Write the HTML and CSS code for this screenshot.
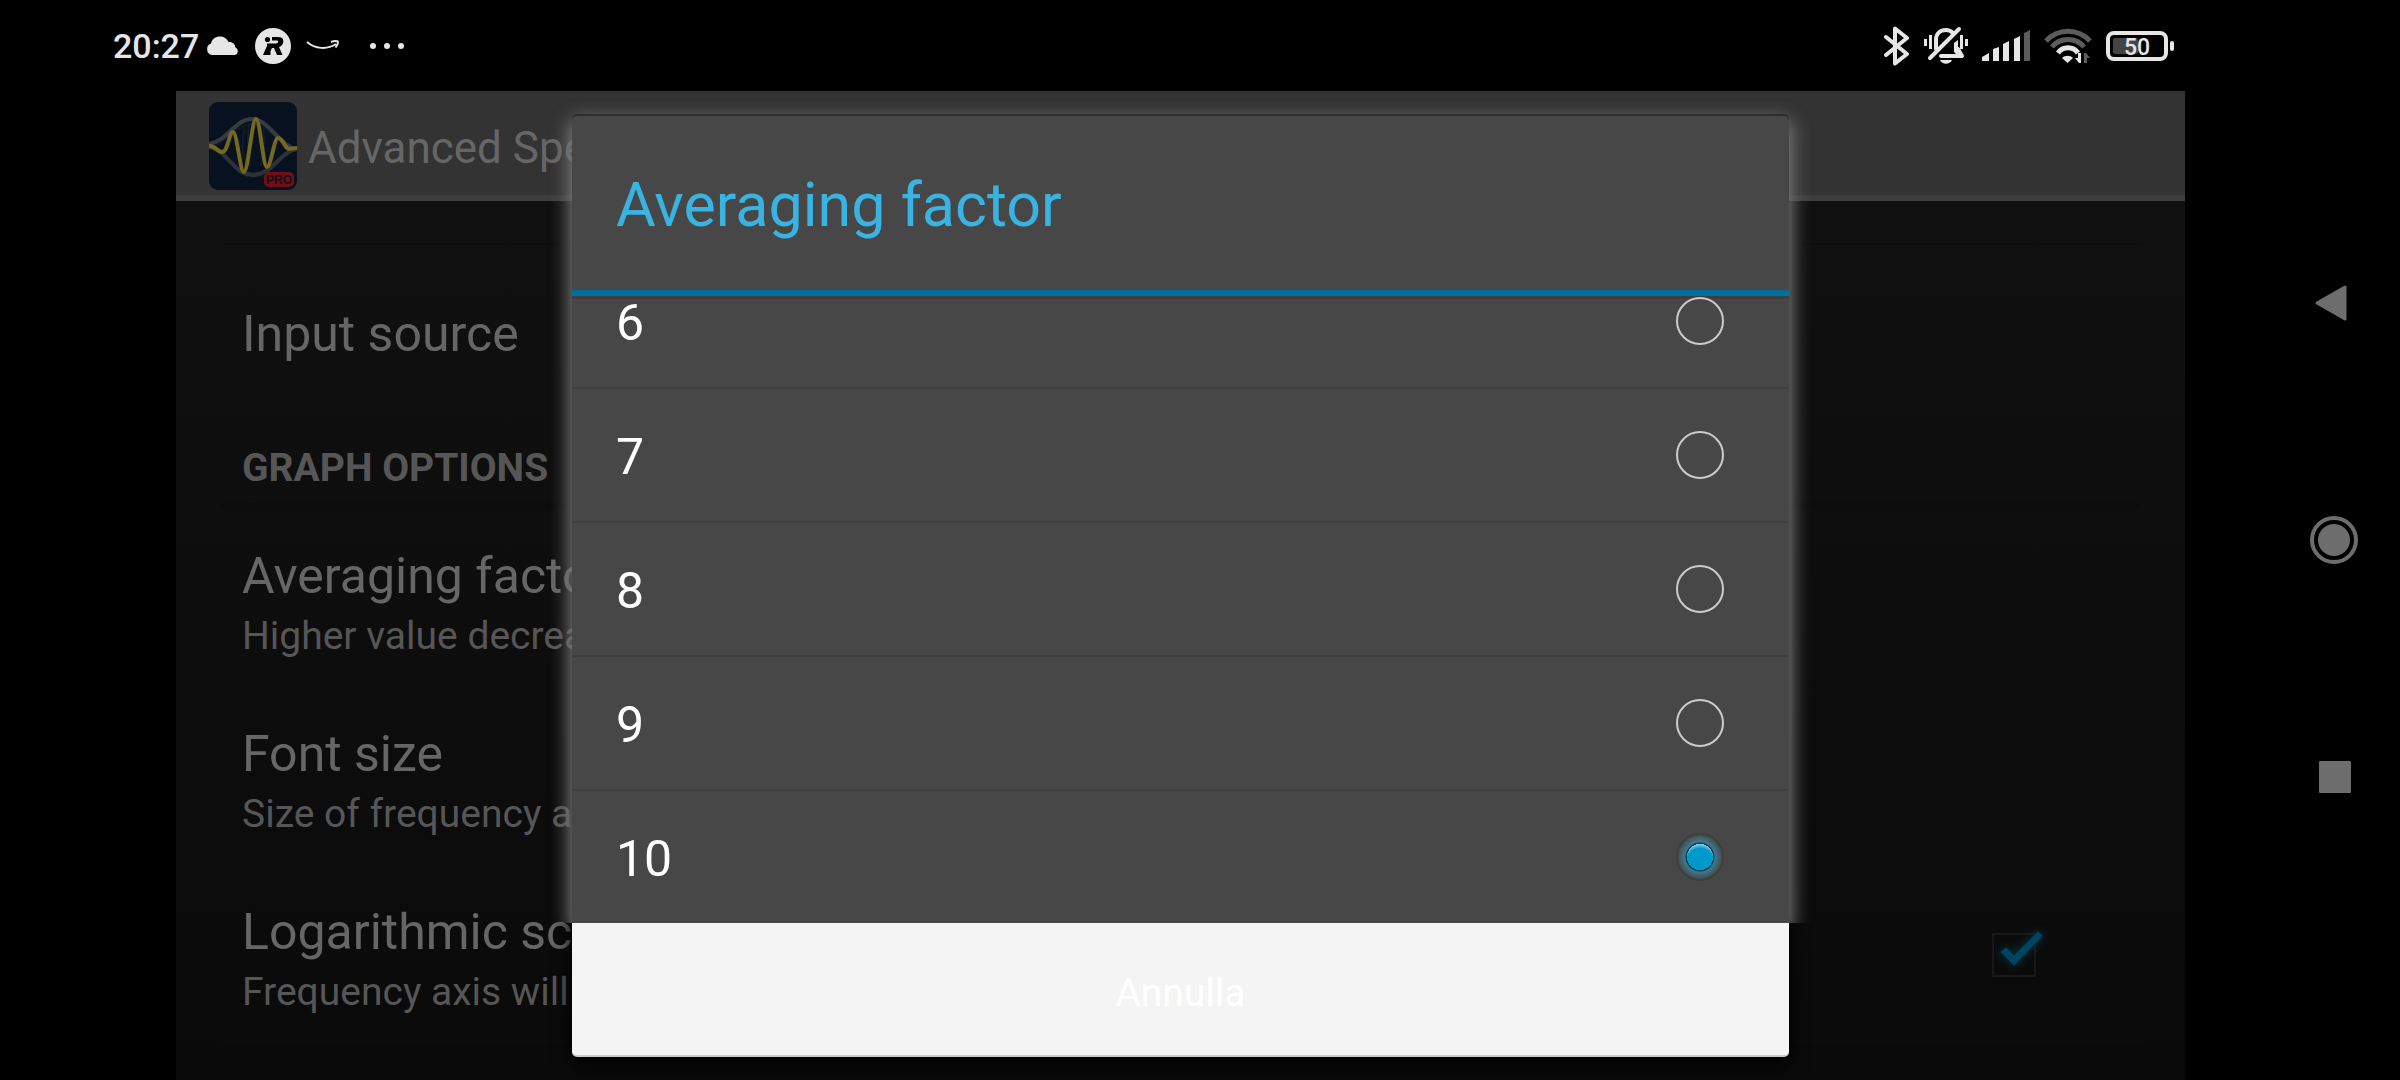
FILE: index.html
```
<!DOCTYPE html>
<html lang="en">

<head>
  <meta charset="utf-8" />
  <meta name="viewport" content="width=device-width, initial-scale=1" />
  <title>Averaging factor</title>
  <link rel="stylesheet" href="styles.css">
</head>

<body>
  <div class="screen">
    <div class="status_bar">
      <div class="status_left">
        <span class="clock">20:27</span>
        <svg class="cloud" width="34" height="20" viewBox="0 0 34 20">
          <path d="M6 19a6 6 0 0 1-1-11.500C6 3 9.500 0.500 14 0.500c4 0 7 2 8.500 5.500 4-.5 6.500 2 7 5.500a4 4 0 0 1-.5 7.500z" />
        </svg>
        <svg class="runner" width="36" height="36" viewBox="0 0 36 36">
          <circle cx="18" cy="18" r="18" />
          <circle class="cut" cx="12.500" cy="11.500" r="2.600" />
          <path class="cut" d="M17 9h6c5 0 6 3 5 6-.6 2-2 3.500-4 4l3.500 8h-5.500l-3-7h-2l-1.500 3v4H8l4-9v-2.500h9c2.500 0 3-3 1-3h-5z" />
        </svg>
        <svg class="smile" width="34" height="12" viewBox="0 0 34 12">
          <path d="M1 2c8 7 20 8 29 2" />
          <path d="M25 2c4-1.500 7-1 7 0s-1 4-2.500 5.500" />
        </svg>
        <svg class="dots" width="34" height="6" viewBox="0 0 34 6">
          <circle cx="3" cy="3" r="3" />
          <circle cx="17" cy="3" r="3" />
          <circle cx="31" cy="3" r="3" />
        </svg>
      </div>

      <div class="status_right">
        <svg class="line_icon" width="26" height="40" viewBox="0 0 26 40">
          <path d="M2 11l21 17-12 9.500V2.500L23 12 2 29" />
        </svg>
        <svg class="bell" width="44" height="40" viewBox="0 0 44 40">
          <path class="stroke" d="M12 23v-9c0-6 4-10 10-10 3 0 5 1 7 3M34 23l4 7H17" />
          <path class="stroke" d="M35 3L6 32" />
          <path class="thin" d="M1.500 13v7M6.500 9v14M37.500 9v14M42.500 13v7" />
          <path d="M34 14v11l3 5h-3l-4-4v-9z" />
          <path d="M16 34h12c-2 5-10 5-12 0z" />
        </svg>
        <svg class="signal" width="48" height="32" viewBox="0 0 48 32">
          <path d="M0 31v-4l7-4v8zM11 31V19l6-2v14zM21 31V14l6-3v20zM32 31V9l6-3v25z" />
          <path class="dim" d="M42 31V3l6-3v31z" />
        </svg>
        <svg class="wifi" width="48" height="36" viewBox="0 0 48 36">
          <path class="dim" d="M2 13c12-13 32-13 44 0" />
          <path class="dim" d="M8 19c8-10 24-10 32 0" />
          <path d="M14 25c5-7 15-7 20 0" />
          <path class="fill" d="M18 30c3-3 8-3 11 0l-5.500 5z" />
          <path class="fill" d="M37 25v10h-2l-4-5h3v-5z" />
          <path class="fill dim_fill" d="M40 35V25h2l4 5h-3v5z" />
        </svg>
        <svg class="battery" width="68" height="30" viewBox="0 0 68 30">
          <rect class="shell" x="2" y="2" width="58" height="26" rx="6" />
          <rect class="level" x="7" y="7" width="25" height="16" rx="2" />
          <rect x="64" y="10" width="4" height="10" rx="2" />
          <text x="31" y="24">50</text>
        </svg>
      </div>
    </div>

    <div class="app">
      <div class="action_bar">
        <svg class="app_icon" width="88" height="88" viewBox="0 0 88 88">
          <rect width="88" height="88" rx="9" fill="#07111f" />
          <path class="faint" d="M4 46C18 36 28 24 43 22s26 22 41 24M6 47c14 10 20 24 37 24s24-14 38-24M36 26q-6 20 2 38M40 24q-3 20 1 40M54 26q4 20-2 38" />
          <path class="envelope" d="M0 42C20 38 26 17 43 17s28 28 45 30" />
          <path class="envelope lower" d="M0 45c18 2 24 28 44 28s26-23 44-26" />
          <path class="wave" d="M0 44c6-1 8 6 13 6 6 0 7-20 11-20s7 40 11 40 8-53 12-53 7 48 11 48 7-29 11-29c5 0 7 11 11 11 3 0 4-1 8-1" />
          <rect x="55" y="70" width="30" height="15" rx="5" fill="#6f1114" />
          <text x="70" y="82">PRO</text>
        </svg>
        <h1>Advanced Spectrum Analyzer PRO</h1>
      </div>

      <div class="settings">
        <div class="item single">
          <div class="item_title">Input source</div>
        </div>
        <h2 class="category">GRAPH OPTIONS</h2>
        <div class="item">
          <div class="item_title">Averaging factor</div>
          <div class="item_summary">Higher value decreases noise</div>
        </div>
        <div class="item">
          <div class="item_title">Font size</div>
          <div class="item_summary">Size of frequency axis labels</div>
        </div>
        <label class="item with_check">
          <span>
            <span class="item_title">Logarithmic scale</span>
            <span class="item_summary">Frequency axis will be logarithmic</span>
          </span>
          <span class="check_box">
            <input type="checkbox" checked>
            <svg class="tick" width="64" height="56" viewBox="0 0 64 56">
              <path d="M16 23l6-5 8 8L54 2l5 5-29 30z" />
            </svg>
          </span>
        </label>
      </div>

      <div class="overlay">
        <div class="dialog" role="dialog" aria-labelledby="dialog_title">
          <div class="dialog_top">
            <h2 id="dialog_title">Averaging factor</h2>
            <div class="choices" role="radiogroup" aria-labelledby="dialog_title">
              <label class="choice"><span>6</span> <input type="radio" name="factor" value="6"></label>
              <label class="choice"><span>7</span> <input type="radio" name="factor" value="7"></label>
              <label class="choice"><span>8</span> <input type="radio" name="factor" value="8"></label>
              <label class="choice"><span>9</span> <input type="radio" name="factor" value="9"></label>
              <label class="choice"><span>10</span> <input type="radio" name="factor" value="10" checked></label>
            </div>
          </div>
          <button type="button" class="cancel_btn">Annulla</button>
        </div>
      </div>
    </div>
  </div>

  <div class="nav_bar">
    <button type="button" class="nav_btn" aria-label="Back">
      <svg width="50" height="46" viewBox="0 0 50 46">
        <path d="M8 23L36 7v32z" stroke-width="3" stroke-linejoin="round" />
      </svg>
    </button>
    <button type="button" class="nav_btn" aria-label="Home">
      <svg width="50" height="50" viewBox="0 0 50 50">
        <circle cx="25" cy="25" r="22" fill="none" stroke-width="4" />
        <circle cx="25" cy="25" r="16" stroke="none" />
      </svg>
    </button>
    <button type="button" class="nav_btn" aria-label="Recent apps">
      <svg width="50" height="46" viewBox="0 0 50 46">
        <rect x="10" y="7" width="32" height="32" rx="1" stroke="none" />
      </svg>
    </button>
  </div>
</body>

</html>
```
FILE: styles.css
```
* {
  box-sizing: border-box;
}

body {
  margin: 0;
  height: 100vh;
  display: flex;
  overflow: hidden;
  background-color: #000;
  font-family: Roboto, "Liberation Sans", sans-serif;
}

h1,
h2 {
  margin: 0;
  font-weight: 400;
}

.screen {
  flex: 1;
  min-width: 0;
  display: flex;
  flex-direction: column;
}

/* status bar */
.status_bar {
  height: 91px;
  padding: 0 94px 0 113px;
  display: flex;
  justify-content: space-between;
  align-items: center;
}

.status_left,
.status_right {
  display: flex;
  align-items: center;
  color: #e6e6e6;
  fill: #e6e6e6;
}

.status_right {
  gap: 14px;
}

.clock {
  font-size: 34px;
  font-weight: 500;
}

.cloud {
  margin-left: 7px;
}

.runner {
  margin: 0 15px;
}

.cut {
  fill: #000;
}

.smile,
.line_icon,
.stroke,
.thin {
  fill: none;
  stroke: #e6e6e6;
  stroke-width: 2;
}

.line_icon,
.stroke {
  stroke-width: 4;
  stroke-linejoin: round;
  stroke-linecap: round;
}

.thin {
  stroke-width: 3;
}

.dots {
  margin-left: 30px;
}

.dim {
  fill: #5c5c5c;
}

.wifi path {
  fill: none;
  stroke: #e6e6e6;
  stroke-width: 5;
}

.wifi .dim {
  stroke: #5c5c5c;
}

.wifi .fill {
  fill: #e6e6e6;
  stroke: none;
}

.wifi .dim_fill {
  fill: #5c5c5c;
}

.shell {
  fill: none;
  stroke: #e6e6e6;
  stroke-width: 4;
}

.level {
  fill: #444;
}

.battery text {
  font-size: 23px;
  font-weight: 500;
  text-anchor: middle;
}

/* app behind the dialog */
.app {
  position: relative;
  flex: 1;
  min-height: 0;
  margin: 0 83px 0 176px;
  display: flex;
  flex-direction: column;
  background: linear-gradient(#111, #0a0a0a);
}

.action_bar {
  height: 110px;
  padding: 6px 0 0 33px;
  display: flex;
  align-items: center;
  gap: 11px;
  background-color: #333;
  border-bottom: 6px solid #3e3e3e;
  color: #666;
}

.action_bar h1 {
  padding-top: 4px;
  font-size: 44px;
}

.app_icon path {
  fill: none;
  stroke-width: 4;
}

.app_icon .wave {
  stroke: #75681f;
}

.app_icon .envelope {
  stroke: #363b42;
}

.app_icon .lower {
  stroke: #2b323b;
}

.app_icon .faint {
  stroke: #101b29;
  stroke-width: 2;
}

.app_icon text {
  font: bold 12px "Liberation Sans", sans-serif;
  text-anchor: middle;
  fill: #150d19;
}

.settings {
  flex: 1;
  min-height: 0;
  margin: 42px 44px 0;
  overflow: hidden;
}

.item {
  display: block;
  height: 178px;
  padding: 38px 22px 0;
  border-bottom: 2px solid #0c0c0c;
}

.single {
  height: 176px;
  padding-top: 60px;
  border-top: 2px solid #0e0e0e;
  border-bottom: 0;
}

.item_title,
.item_summary {
  display: block;
}

.item_title {
  font-size: 50px;
  line-height: 58px;
  color: #666;
}

.item_summary {
  margin-top: 8px;
  font-size: 39px;
  line-height: 46px;
  color: #565656;
}

.category {
  height: 90px;
  padding: 26px 22px 0;
  border-bottom: 6px solid #0c0c0c;
  font-size: 39px;
  font-weight: 700;
  line-height: 46px;
  color: #565656;
}

.with_check {
  display: flex;
  justify-content: space-between;
}

.check_box {
  position: relative;
  margin: 30px 83px 0 0;
  width: 44px;
  height: 44px;
}

.check_box input {
  appearance: none;
  display: block;
  margin: 0;
  width: 44px;
  height: 44px;
  border: 2px solid #181818;
}

.tick {
  position: absolute;
  top: -4px;
  left: -8px;
  fill: #00455f;
  stroke: #022230;
  filter: drop-shadow(0 0 4px #00354a);
}

/* dialog */
.overlay {
  position: absolute;
  inset: 0;
  padding: 23px;
  display: flex;
  justify-content: center;
}

.dialog {
  width: 1217px;
  max-width: 100%;
  display: flex;
  flex-direction: column;
  border-radius: 5px;
  box-shadow: 0 8px 20px #000;
}

.dialog_top {
  flex: 1;
  min-height: 0;
  display: flex;
  flex-direction: column;
  border-radius: 5px 5px 0 0;
  background-color: #474747;
  box-shadow: 0 8px 20px 2px rgba(255, 255, 255, 0.55), inset 0 2px #2e2e2e;
  /* the glow stops where the cancel button begins */
  clip-path: inset(-30px -30px 0 -30px);
}

.dialog_top h2 {
  height: 182px;
  padding: 6px 44px 0;
  border-bottom: 6px solid #006f9b;
  font-size: 61px;
  line-height: 170px;
  color: #38b3e2;
}

.choices {
  flex: 1;
  min-height: 0;
  display: flex;
  flex-direction: column;
  justify-content: flex-end;
  overflow: hidden;
  box-shadow: inset 0 3px #3f3f3f;
}

.choice {
  flex: none;
  height: 134px;
  padding: 0 65px 0 44px;
  display: flex;
  justify-content: space-between;
  align-items: center;
  border-top: 2px solid #404040;
  font-size: 50px;
  color: #fff;
}

.choice span {
  padding-top: 4px;
}

.choice input {
  appearance: none;
  margin: 0;
  width: 48px;
  height: 48px;
  border: 2px solid #ccc;
  border-radius: 50%;
}

.choice input:checked {
  border-color: #3f3f3f;
  background: radial-gradient(circle, transparent 13px, #123f50 13px, #123f50 14px, #3c7a90 15px, #474747 23px), radial-gradient(circle at 50% 60%, #09c 13px, #9bd8ee 18px);
}

.cancel_btn {
  height: 134px;
  padding: 8px 0 0;
  border: 0;
  border-bottom: 2px solid #c8cccc;
  border-radius: 0 0 5px 5px;
  background-color: #f4f4f4;
  font-family: inherit;
  font-size: 39px;
  color: #fff;
}

/* navigation keys */
.nav_bar {
  width: 132px;
  padding-top: 2px;
  display: flex;
  flex-direction: column;
  justify-content: center;
}

.nav_btn {
  height: 237px;
  padding: 0;
  border: 0;
  background: none;
  fill: #6d6d6d;
  stroke: #6d6d6d;
}
```
